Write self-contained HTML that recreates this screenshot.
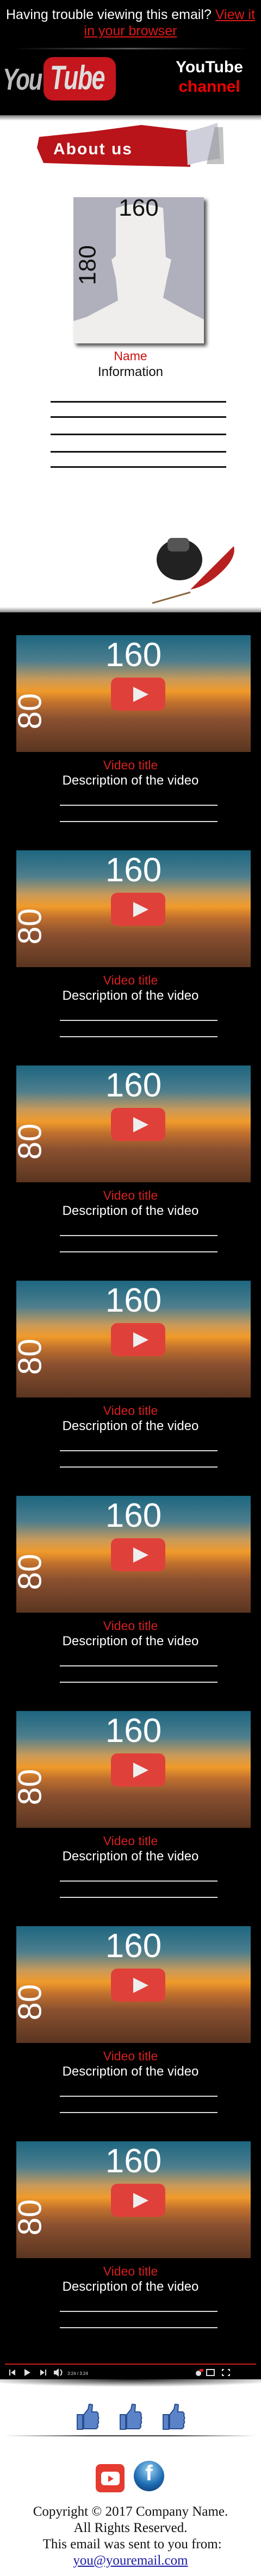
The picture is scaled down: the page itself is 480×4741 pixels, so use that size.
<!DOCTYPE html>
<html><head><meta charset="utf-8"><style>
*{margin:0;padding:0;box-sizing:border-box}
body{width:480px;height:4741px;position:relative;background:#fff;font-family:"Liberation Sans",sans-serif;overflow:hidden}
.a{position:absolute}
.thumb{position:absolute;left:30px;width:431px;height:215px;overflow:hidden;background:linear-gradient(180deg,#1d6680 0%,#4d7e8e 22%,#c99a5a 38%,#f09a2a 48%,#c0702e 58%,#8a5030 72%,#5a3520 100%)}
.t160{position:absolute;left:0;width:431px;top:6px;text-align:center;color:#fff;font-size:62px;line-height:62px}
.t80{position:absolute;left:-8px;top:110px;color:#fff;font-size:60px;line-height:60px;transform:rotate(-90deg);transform-origin:center}
.play{position:absolute;left:174px;top:78px;width:100px;height:61px;background:#e0403a;border-radius:12px}
.play:after{content:"";position:absolute;left:41px;top:17px;border-left:28px solid #eee;border-top:14px solid transparent;border-bottom:14px solid transparent}
.vt{position:absolute;left:0;width:480px;text-align:center;color:#d52020;font-size:23px}
.vd{position:absolute;left:0;width:480px;text-align:center;color:#fff;font-size:24px}
.vl{position:absolute;left:110px;width:290px;height:2px;background:#ddd}
.ln{position:absolute;left:93px;width:323px;height:3px;background:#111}
</style></head><body>
<div class="a" style="left:0;top:0;width:480px;height:212px;background:#000"></div>
<div class="a" style="left:0;top:12px;width:480px;text-align:center;color:#fff;font-size:25px;line-height:30px;white-space:nowrap">Having trouble viewing this email? <span style="color:#e01818;text-decoration:underline">View it</span><br><span style="color:#e01818;text-decoration:underline">in your browser</span></div>
<div class="a" style="left:20px;top:88px;width:440px;height:3px;background:linear-gradient(90deg,#000,#555,#000)"></div>
<div class="a" style="left:5px;top:113px;font-size:56px;font-weight:bold;font-style:italic;color:#bbb;letter-spacing:-3px;transform:scaleX(.75);transform-origin:left">You</div>
<div class="a" style="left:80px;top:105px;width:133px;height:80px;background:#c4161c;border-radius:18px"></div>
<div class="a" style="left:92px;top:108px;font-size:62px;font-weight:bold;font-style:italic;color:#ddd;letter-spacing:-2px;transform:scaleX(.72);transform-origin:left">Tube</div>
<div class="a" style="left:300px;top:106px;width:170px;text-align:center;color:#fff;font-size:30px;font-weight:bold;line-height:36px">YouTube<br><span style="color:#e00">channel</span></div>
<div class="a" style="left:0;top:212px;width:480px;height:10px;background:linear-gradient(180deg,#777,#fff)"></div>
<svg class="a" style="left:60px;top:222px" width="360" height="90"><path d="M12 30 L110 20 L200 8 L285 18 L290 85 L150 82 L20 78 L8 50 Z" fill="#b8141a"/><path d="M282 20 Q310 15 340 4 L345 70 Q320 72 285 82 Z" fill="#cfcfdc"/><path d="M335 12 L350 12 L352 80 L320 80Z" fill="#888" opacity=".5"/><text x="38" y="62" font-family="Liberation Sans" font-weight="bold" font-size="30" fill="#fff" letter-spacing="2">About us</text></svg>
<div class="a" style="left:135px;top:363px;width:240px;height:269px;background:#b0b0bc;box-shadow:5px 5px 6px #555;overflow:hidden">
<svg width="240" height="269"><path d="M78 20 Q120 5 165 20 L170 110 L180 115 L172 150 L165 185 L210 210 L240 225 L240 269 L0 269 L0 228 L25 220 L82 190 L78 150 L70 115 L78 108 Z" fill="#efeeec"/></svg>
<div class="a" style="left:0;top:0;width:240px;text-align:center;font-size:44px;color:#111;line-height:40px">160</div>
<div class="a" style="left:-10px;top:100px;font-size:44px;color:#111;transform:rotate(-90deg)">180</div>
</div>
<div class="a" style="left:0;top:642px;width:480px;text-align:center;color:#cc1010;font-size:23px">Name</div>
<div class="a" style="left:0;top:671px;width:480px;text-align:center;color:#111;font-size:24px">Information</div>
<div class="ln" style="top:738px"></div><div class="ln" style="top:766px"></div><div class="ln" style="top:798px"></div><div class="ln" style="top:830px"></div><div class="ln" style="top:858px"></div>
<svg class="a" style="left:280px;top:985px" width="160" height="130"><ellipse cx="50" cy="45" rx="42" ry="38" fill="#222"/><rect x="28" y="5" width="40" height="25" rx="8" fill="#555"/><path d="M60 110 Q110 60 150 20 Q155 40 130 65 Q100 95 70 100Z" fill="#b82020"/><line x1="0" y1="125" x2="70" y2="105" stroke="#8a6a40" stroke-width="3"/></svg>
<div class="a" style="left:0;top:1117px;width:480px;height:10px;background:linear-gradient(180deg,#fff,#888)"></div>
<div class="a" style="left:0;top:1127px;width:480px;height:3254px;background:#000"></div>

<div class="thumb" style="top:1169px"><div class="t160">160</div><div class="t80">80</div><div class="play"></div></div>
<div class="vt" style="top:1395px">Video title</div><div class="vd" style="top:1423px">Description of the video</div><div class="vl" style="top:1481px"></div><div class="vl" style="top:1511px"></div>

<div class="thumb" style="top:1565px"><div class="t160">160</div><div class="t80">80</div><div class="play"></div></div>
<div class="vt" style="top:1791px">Video title</div><div class="vd" style="top:1819px">Description of the video</div><div class="vl" style="top:1877px"></div><div class="vl" style="top:1907px"></div>

<div class="thumb" style="top:1961px"><div class="t160">160</div><div class="t80">80</div><div class="play"></div></div>
<div class="vt" style="top:2187px">Video title</div><div class="vd" style="top:2215px">Description of the video</div><div class="vl" style="top:2273px"></div><div class="vl" style="top:2303px"></div>

<div class="thumb" style="top:2357px"><div class="t160">160</div><div class="t80">80</div><div class="play"></div></div>
<div class="vt" style="top:2583px">Video title</div><div class="vd" style="top:2611px">Description of the video</div><div class="vl" style="top:2669px"></div><div class="vl" style="top:2699px"></div>

<div class="thumb" style="top:2753px"><div class="t160">160</div><div class="t80">80</div><div class="play"></div></div>
<div class="vt" style="top:2979px">Video title</div><div class="vd" style="top:3007px">Description of the video</div><div class="vl" style="top:3065px"></div><div class="vl" style="top:3095px"></div>

<div class="thumb" style="top:3149px"><div class="t160">160</div><div class="t80">80</div><div class="play"></div></div>
<div class="vt" style="top:3375px">Video title</div><div class="vd" style="top:3403px">Description of the video</div><div class="vl" style="top:3461px"></div><div class="vl" style="top:3491px"></div>

<div class="thumb" style="top:3545px"><div class="t160">160</div><div class="t80">80</div><div class="play"></div></div>
<div class="vt" style="top:3771px">Video title</div><div class="vd" style="top:3799px">Description of the video</div><div class="vl" style="top:3857px"></div><div class="vl" style="top:3887px"></div>

<div class="thumb" style="top:3941px"><div class="t160">160</div><div class="t80">80</div><div class="play"></div></div>
<div class="vt" style="top:4167px">Video title</div><div class="vd" style="top:4195px">Description of the video</div><div class="vl" style="top:4253px"></div><div class="vl" style="top:4283px"></div>

<div class="a" style="left:9px;top:4350px;width:462px;height:2px;background:#d02020"></div>
<svg class="a" style="left:0;top:4356px" width="480" height="22"><g fill="#ddd"><rect x="17" y="5" width="2" height="11"/><path d="M28 5 L20 10.5 L28 16Z"/><path d="M45 4 L56 10.5 L45 17Z"/><path d="M74 5 L82 10.5 L74 16Z"/><rect x="83" y="5" width="2" height="11"/><path d="M99 7 L103 7 L108 3 L108 18 L103 14 L99 14Z"/><path d="M111 5 Q116 10.5 111 16" stroke="#ddd" stroke-width="2" fill="none"/><rect x="380" y="5" width="14" height="11" fill="none" stroke="#ddd" stroke-width="2"/><path d="M408 4h4v2h-2v2h-2zM419 4h4v4h-2v-2h-2zM408 13h2v2h2v2h-4zM421 13h2v4h-4v-2h2z"/><circle cx="365" cy="12" r="5"/></g><rect x="367" y="4" width="7" height="5" fill="#d02020"/><text x="124" y="15" font-size="8" fill="#ddd" font-family="Liberation Sans">3:24 / 3:24</text></svg>
<div class="a" style="left:0;top:4379px;width:480px;height:14px;background:radial-gradient(ellipse 60% 100% at 50% 0%,#222,#fff)"></div>
<svg class="a" style="left:140px;top:4424px" width="202" height="50"><defs><g id="th"><path d="M2 20 L12 20 L12 47 L2 47Z M14 20 L22 10 L24 0 L30 2 L29 15 L38 15 Q42 18 40 22 Q43 26 40 30 Q43 34 39 38 Q42 42 37 46 L14 46Z" fill="#5b84c8" stroke="#2a4d8f" stroke-width="2"/></g></defs><use href="#th"/><use href="#th" x="79"/><use href="#th" x="158"/></svg>
<div class="a" style="left:8px;top:4482px;width:464px;height:2px;background:linear-gradient(90deg,#fff,#333,#333,#fff)"></div>
<div class="a" style="left:176px;top:4535px;width:53px;height:52px;background:#e53b30;border-radius:9px"></div>
<div class="a" style="left:186px;top:4549px;width:34px;height:25px;background:#fff;border-radius:6px"></div>
<div class="a" style="left:199px;top:4556px;border-left:10px solid #e53b30;border-top:6px solid transparent;border-bottom:6px solid transparent"></div>
<div class="a" style="left:246px;top:4529px;width:56px;height:56px;border-radius:50%;background:radial-gradient(circle at 50% 30%,#9fd3f5,#1f6fb5 55%,#0b2d66)"></div>
<div class="a" style="left:246px;top:4530px;width:56px;text-align:center;color:#fff;font-weight:bold;font-size:40px">f</div>
<div class="a" style="left:0;top:4608px;width:480px;text-align:center;font-family:'Liberation Serif',serif;font-size:25px;line-height:30px;color:#111">Copyright © 2017 Company Name.<br>All Rights Reserved.<br>&nbsp;This email was sent to you from:<br><span style="color:#1a1aa8;text-decoration:underline">you@youremail.com</span></div>
</body></html>
